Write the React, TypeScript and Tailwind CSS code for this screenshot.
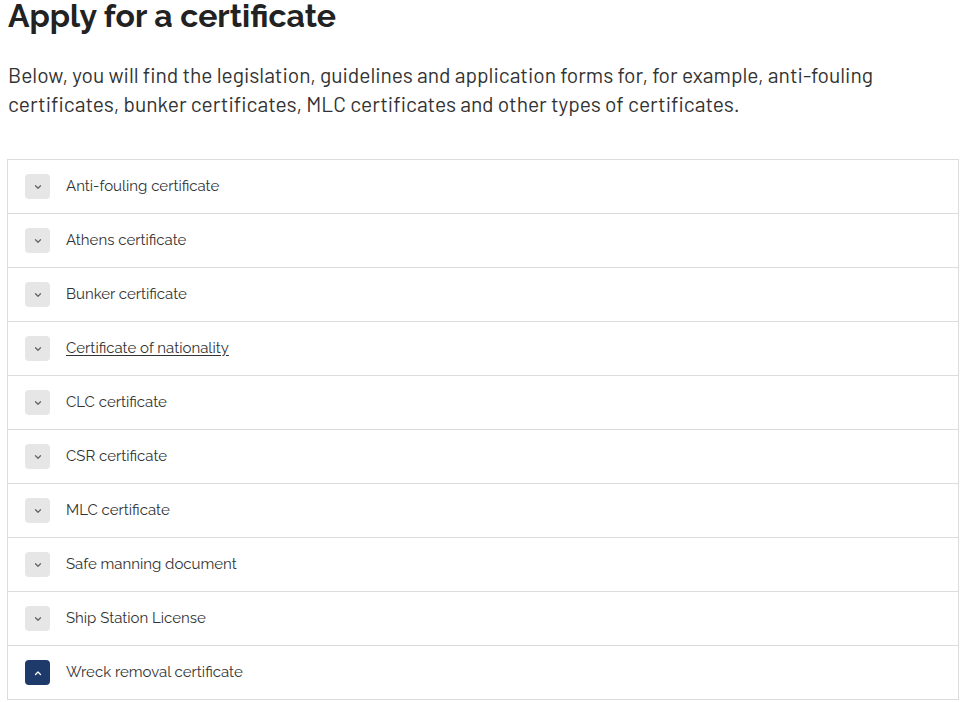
import React from "react";

const items = [
  "Anti-fouling certificate",
  "Athens certificate",
  "Bunker certificate",
  "Certificate of nationality",
  "CLC certificate",
  "CSR certificate",
  "MLC certificate",
  "Safe manning document",
  "Ship Station License",
  "Wreck removal certificate",
];

function Chevron({ up, color }: { up?: boolean; color: string }) {
  return (
    <svg width="8" height="6" viewBox="0 0 8 6" fill="none">
      <path
        d={up ? "M1.5 4.5 L4 2 L6.5 4.5" : "M1.5 1.8 L4 4.2 L6.5 1.8"}
        stroke={color}
        strokeWidth="1.3"
        strokeLinecap="round"
        strokeLinejoin="round"
      />
    </svg>
  );
}

export default function App() {
  return (
    <div className="bg-white w-[966px] h-[702px] overflow-hidden text-[#222]">
      <h1
        className="ml-[8px] mt-[-6px] text-[32px] leading-[44px] font-bold text-[#222]"
        style={{ fontFamily: "Raleway, Lato, 'Noto Sans', sans-serif" }}
      >
        Apply for a certificate
      </h1>
      <p
        className="ml-[8px] mt-[22px] text-[21px] leading-[29px] text-[#333]"
        style={{ fontFamily: "Barlow, Roboto, 'Noto Sans', sans-serif" }}
      >
        Below, you will find the legislation, guidelines and application forms for, for example, anti-fouling
        <br />
        certificates, bunker certificates, MLC certificates and other types of certificates.
      </p>
      <div className="ml-[7px] mt-[41px] w-[952px] border border-[#dcdcdc] border-b-0">
        {items.map((t, i) => {
          const open = i === items.length - 1;
          return (
            <div key={t} className="h-[54px] border-b border-[#dcdcdc] flex items-center pl-[17px]">
              <div
                className={
                  "w-[25px] h-[25px] rounded-[4px] flex items-center justify-center " +
                  (open ? "bg-[#1e3a6b]" : "bg-[#e6e6e6]")
                }
              >
                <Chevron up={open} color={open ? "#ffffff" : "#666666"} />
              </div>
              <span
                className={
                  "ml-[16px] text-[15px] text-[#333] " + (i === 3 ? "underline underline-offset-2" : "")
                }
                style={{ fontFamily: "Raleway, Lato, 'Noto Sans', sans-serif" }}
              >
                {t}
              </span>
            </div>
          );
        })}
      </div>
    </div>
  );
}
